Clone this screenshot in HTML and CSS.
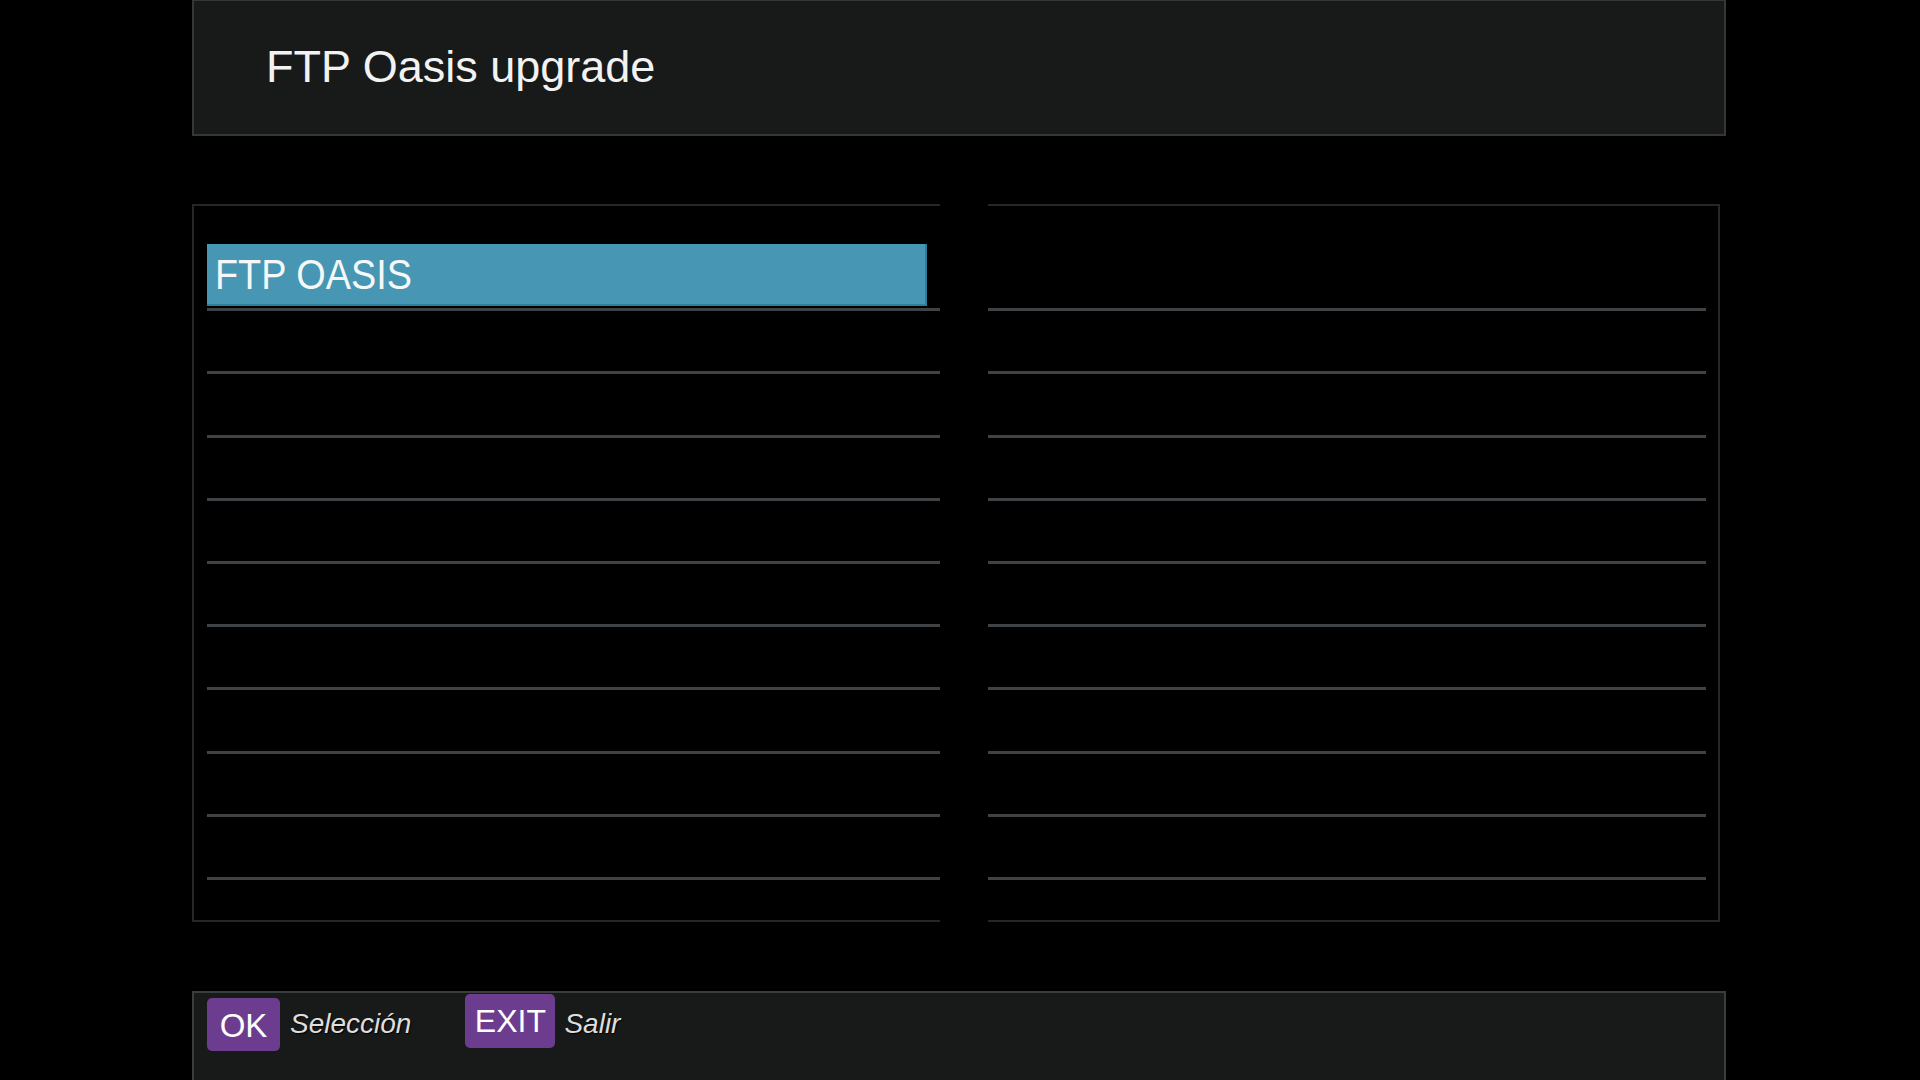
FILE: index.html
```html
<!DOCTYPE html>
<html lang="es">
<head>
<meta charset="utf-8">
<title>FTP Oasis upgrade</title>
<link rel="stylesheet" href="styles.css">
</head>
<body>
<div class="screen">
  <header class="header">
    <h1 class="title">FTP Oasis upgrade</h1>
  </header>
  <main class="lists">
    <section class="panel panel-left">
      <div class="row"><div class="sel"><span class="sel-text">FTP OASIS</span></div></div>
      <div class="row"></div>
      <div class="row"></div>
      <div class="row"></div>
      <div class="row"></div>
      <div class="row"></div>
      <div class="row"></div>
      <div class="row"></div>
      <div class="row"></div>
      <div class="row"></div>
    </section>
    <section class="panel panel-right">
      <div class="row"></div>
      <div class="row"></div>
      <div class="row"></div>
      <div class="row"></div>
      <div class="row"></div>
      <div class="row"></div>
      <div class="row"></div>
      <div class="row"></div>
      <div class="row"></div>
      <div class="row"></div>
    </section>
  </main>
  <footer class="footer">
    <span class="key key-ok">OK</span>
    <span class="label label-sel">Selección</span>
    <span class="key key-exit">EXIT</span>
    <span class="label">Salir</span>
  </footer>
</div>
</body>
</html>
```
FILE: styles.css
```css
html, body {
  margin: 0;
  padding: 0;
  background: #000;
  width: 1920px;
  height: 1080px;
  overflow: hidden;
}

.screen {
  margin-left: 192px;
  width: 1534px;
  font-family: "Liberation Sans", Arial, sans-serif;
}

.header {
  box-sizing: border-box;
  height: 136px;
  background: #171a19;
  border: 2px solid #343736;
  border-top-width: 1px;
  display: flex;
  align-items: center;
  padding: 0 0 0 72px;
}

.title {
  margin: 0 0 2px 0;
  font-weight: normal;
  font-size: 45px;
  color: #f2f2f2;
}

.lists {
  display: flex;
  gap: 48px;
  margin-top: 68px;
  width: 1528px;
}

.panel {
  box-sizing: border-box;
  height: 718px;
  border-top: 2px solid #252726;
  border-bottom: 2px solid #252726;
  padding-top: 42px;
}

.panel-left {
  width: 748px;
  border-left: 2px solid #252726;
  padding-left: 13px;
}

.panel-right {
  width: 732px;
  border-right: 2px solid #252726;
  padding-right: 12px;
}

.row {
  display: flow-root;
  height: 60.2px;
  border-bottom: 3px solid #404345;
}

.sel {
  box-sizing: border-box;
  width: 720px;
  height: 62px;
  margin-top: -4px;
  background: #4696b4;
  border-right: 2px solid #2f7f9c;
  border-bottom: 2px solid #2f7f9c;
  display: flex;
  align-items: center;
  padding-left: 8px;
}

.sel-text {
  display: inline-block;
  font-size: 43px;
  color: #f4f8f8;
  transform: scaleX(0.88);
  transform-origin: left center;
  white-space: nowrap;
}

.footer {
  box-sizing: border-box;
  margin-top: 69px;
  height: 89px;
  background: #171a19;
  border: 2px solid #3a3d3c;
  border-bottom: none;
  display: flex;
  align-items: flex-start;
  padding: 0 0 0 13px;
}

.key {
  background: #6c3d8e;
  color: #fff;
  border-radius: 5px;
  display: flex;
  align-items: center;
  justify-content: center;
  font-size: 32px;
}

.key-ok {
  width: 73px;
  height: 53px;
  margin-top: 5px;
  font-size: 33px;
  padding-top: 2px;
  box-sizing: border-box;
}

.key-exit {
  width: 90px;
  height: 54px;
  margin-top: 1px;
  margin-left: 54px;
}

.label {
  font-style: italic;
  font-size: 28px;
  color: #dedede;
  text-shadow: 1px 1px 1px #000;
  margin-left: 9px;
  margin-top: 15px;
}

.label-sel {
  margin-left: 10px;
}
```
